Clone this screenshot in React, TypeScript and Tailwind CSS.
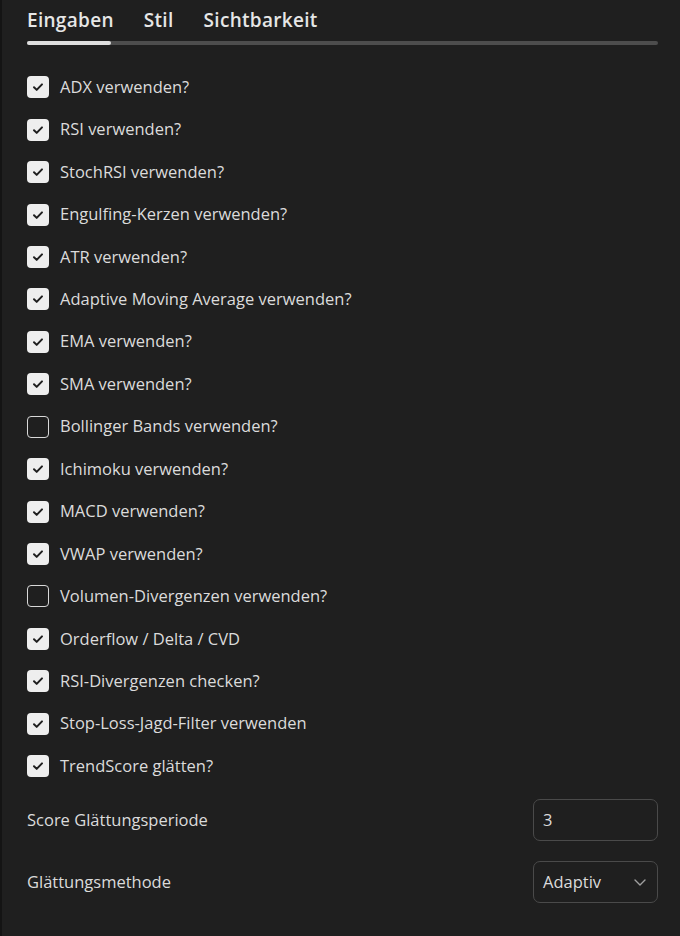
import React from "react";

const items: { label: string; checked: boolean }[] = [
  { label: "ADX verwenden?", checked: true },
  { label: "RSI verwenden?", checked: true },
  { label: "StochRSI verwenden?", checked: true },
  { label: "Engulfing-Kerzen verwenden?", checked: true },
  { label: "ATR verwenden?", checked: true },
  { label: "Adaptive Moving Average verwenden?", checked: true },
  { label: "EMA verwenden?", checked: true },
  { label: "SMA verwenden?", checked: true },
  { label: "Bollinger Bands verwenden?", checked: false },
  { label: "Ichimoku verwenden?", checked: true },
  { label: "MACD verwenden?", checked: true },
  { label: "VWAP verwenden?", checked: true },
  { label: "Volumen-Divergenzen verwenden?", checked: false },
  { label: "Orderflow / Delta / CVD", checked: true },
  { label: "RSI-Divergenzen checken?", checked: true },
  { label: "Stop-Loss-Jagd-Filter verwenden", checked: true },
  { label: "TrendScore glätten?", checked: true },
];

function Checkbox({ checked }: { checked: boolean }) {
  if (!checked) {
    return <div className="w-[22px] h-[22px] rounded-[4px] border border-[#d8d8d8] shrink-0" />;
  }
  return (
    <div className="w-[22px] h-[22px] rounded-[4px] bg-[#eeeeee] shrink-0 flex items-center justify-center">
      <svg width="14" height="14" viewBox="0 0 14 14" fill="none">
        <path d="M3 7.2l2.7 2.7L11 4.4" stroke="#1f1f1f" strokeWidth="2" strokeLinecap="round" strokeLinejoin="round" />
      </svg>
    </div>
  );
}

export default function App() {
  return (
    <div
      className="w-[680px] h-[936px] bg-[#1f1f1f] text-[#dbdbdb] flex overflow-hidden"
      style={{ fontFamily: '"Open Sans", "Noto Sans", sans-serif' }}
    >
      <div className="w-[2px] bg-[#141414] shrink-0" />
      <div className="flex-1 pl-[25px] pr-[22px]">
        {/* Tabs */}
        <div className="h-[41px] flex items-center gap-[30px] text-[19px] font-semibold text-[#e6e6e6] tracking-[0.3px]">
          <span>Eingaben</span>
          <span>Stil</span>
          <span>Sichtbarkeit</span>
        </div>
        <div className="h-[4px] rounded-full bg-[#4d4d4d] flex">
          <div className="w-[84px] h-full rounded-full bg-[#dedede]" />
        </div>

        {/* Checkbox list */}
        <div className="mt-[21px] flex flex-col">
          {items.map((it) => (
            <div key={it.label} className="h-[42.44px] flex items-center gap-[11px] text-[16.5px]">
              <Checkbox checked={it.checked} />
              <span>{it.label}</span>
            </div>
          ))}
        </div>

        {/* Inputs */}
        <div className="mt-[12px] flex items-center justify-between h-[42px] text-[16.5px]">
          <span>Score Glättungsperiode</span>
          <div className="w-[125px] h-[42px] rounded-[7px] border border-[#4a4a4a] flex items-center px-[9px]">3</div>
        </div>
        <div className="mt-[20px] flex items-center justify-between h-[42px] text-[16.5px]">
          <span>Glättungsmethode</span>
          <div className="w-[125px] h-[42px] rounded-[7px] border border-[#4a4a4a] flex items-center justify-between pl-[9px] pr-[10px]">
            <span>Adaptiv</span>
            <svg width="14" height="14" viewBox="0 0 14 14" fill="none">
              <path d="M2 5l5 5 5-5" stroke="#a0a0a0" strokeWidth="1.4" strokeLinecap="round" strokeLinejoin="round" />
            </svg>
          </div>
        </div>
      </div>
    </div>
  );
}
